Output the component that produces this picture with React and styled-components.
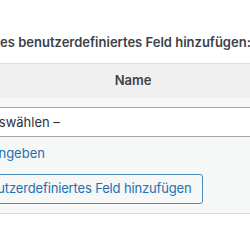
import React from "react";
import styled, { createGlobalStyle } from "styled-components";

const Global = createGlobalStyle`
  html, body {
    margin: 0;
    padding: 0;
    background: #ffffff;
    overflow: hidden;
  }
  body {
    font-family: Inter, "Noto Sans", "Liberation Sans", sans-serif;
    font-size: 13px;
    line-height: 1.4;
    color: #3c434a;
  }
`;

const Viewport = styled.div`
  width: 250px;
  height: 250px;
  overflow: hidden;
`;

const Box = styled.div`
  margin-left: ${(p) => p.$shift}px;
  width: 920px;
  padding-top: 33px;
`;

const Heading = styled.p`
  margin: 0 0 12px;
  font-weight: 600;
  white-space: nowrap;
  color: #3c434a;
`;

const Table = styled.table`
  width: 100%;
  border: 1px solid #dcdcde;
  border-spacing: 0;
  background: #f6f7f7;
`;

const HeadCell = styled.th`
  width: ${(p) => p.$width || "auto"};
  padding: 7px 8px 9px;
  background: #f0f0f1;
  font-weight: 600;
  text-align: center;
  color: #3c434a;
`;

const Cell = styled.td`
  vertical-align: top;
  padding: 0 0 ${(p) => p.$bottom || 0}px;
`;

const Select = styled.select`
  display: block;
  appearance: none;
  box-sizing: border-box;
  width: 96%;
  height: 30px;
  margin: 9px 8px 0;
  padding: 0 24px 0 8px;
  border: 1px solid #a2a6ab;
  border-radius: 4px;
  background: #ffffff;
  font: inherit;
  color: #2c3338;
`;

const TextArea = styled.textarea`
  display: block;
  box-sizing: border-box;
  width: 96%;
  height: 50px;
  margin: 9px 8px 0;
  border: 1px solid #a2a6ab;
  border-radius: 4px;
  background: #ffffff;
  resize: none;
`;

const EnterNew = styled.a`
  display: block;
  margin: 7px 8px 0 4px;
  color: #2271b1;
  text-decoration: none;
  white-space: nowrap;
`;

const Submit = styled.div`
  padding: 11px 8px 0 8px;
`;

const Button = styled.button`
  box-sizing: border-box;
  height: 30px;
  padding: 0 10px;
  border: 1px solid #4a8dbf;
  border-radius: 3px;
  background: #f6f7f7;
  color: #2271b1;
  font: inherit;
  letter-spacing: -0.15px;
  white-space: nowrap;
  cursor: pointer;
`;

export default function App() {
  return (
    <>
      <Global />
      <Viewport>
        <Box $shift={-46}>
          <Heading>Ein neues benutzerdefiniertes Feld hinzufügen:</Heading>
          <Table>
            <thead>
              <tr>
                <HeadCell $width="340px">Name</HeadCell>
                <HeadCell>Wert</HeadCell>
              </tr>
            </thead>
            <tbody>
              <tr>
                <Cell>
                  <Select defaultValue="none">
                    <option value="none">– Auswählen –</option>
                  </Select>
                  <EnterNew href="#">Neu eingeben</EnterNew>
                </Cell>
                <Cell>
                  <TextArea rows={2} />
                </Cell>
              </tr>
              <tr>
                <Cell colSpan={2} $bottom={9}>
                  <Submit>
                    <Button type="button">Benutzerdefiniertes Feld hinzufügen</Button>
                  </Submit>
                </Cell>
              </tr>
            </tbody>
          </Table>
        </Box>
      </Viewport>
    </>
  );
}
